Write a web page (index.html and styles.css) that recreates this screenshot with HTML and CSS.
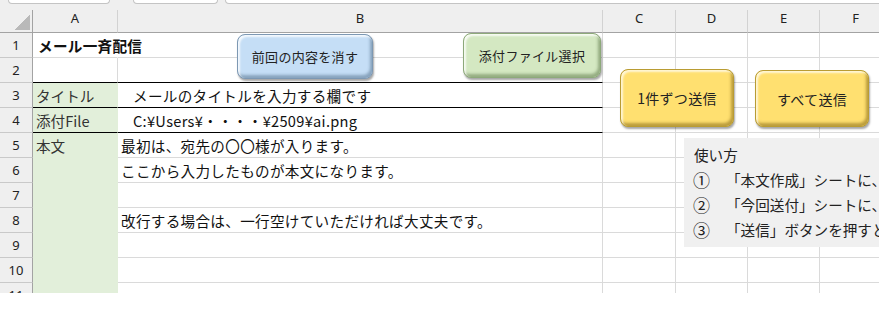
FILE: index.html
```html
<!DOCTYPE html>
<html lang="ja">
<head>
<meta charset="utf-8">
<title>メール一斉配信</title>
<link rel="stylesheet" href="styles.css">
</head>
<body>
<div class="sheet">
  <div class="topbar">
    <div class="tab t1"></div>
    <div class="tab t2"></div>
    <div class="tab t3"></div>
  </div>
  <div class="grid">
    <div class="h corner"><span class="tri"></span></div>
    <div class="h">A</div>
    <div class="h">B</div>
    <div class="h">C</div>
    <div class="h">D</div>
    <div class="h">E</div>
    <div class="h">F</div>

    <div class="r">1</div>
    <div class="c title nor">メール一斉配信</div>
    <div class="c"></div><div class="c"></div><div class="c"></div><div class="c"></div><div class="c"></div>

    <div class="r">2</div>
    <div class="c bk"></div>
    <div class="c bk"></div><div class="c"></div><div class="c"></div><div class="c"></div><div class="c"></div>

    <div class="r">3</div>
    <div class="c g bk">タイトル</div>
    <div class="c bk ind">メールのタイトルを入力する欄です</div><div class="c"></div><div class="c"></div><div class="c"></div><div class="c"></div>

    <div class="r">4</div>
    <div class="c g bk">添付File</div>
    <div class="c bk ind">C:¥Users¥・・・・¥2509¥ai.png</div><div class="c"></div><div class="c"></div><div class="c"></div><div class="c"></div>

    <div class="r">5</div>
    <div class="c g gg">本文</div>
    <div class="c">最初は、宛先の〇〇様が入ります。</div><div class="c"></div><div class="c"></div><div class="c"></div><div class="c"></div>

    <div class="r">6</div>
    <div class="c g gg"></div>
    <div class="c">ここから入力したものが本文になります。</div><div class="c"></div><div class="c"></div><div class="c"></div><div class="c"></div>

    <div class="r">7</div>
    <div class="c g gg"></div>
    <div class="c"></div><div class="c"></div><div class="c"></div><div class="c"></div><div class="c"></div>

    <div class="r">8</div>
    <div class="c g gg"></div>
    <div class="c">改行する場合は、一行空けていただければ大丈夫です。</div><div class="c"></div><div class="c"></div><div class="c"></div><div class="c"></div>

    <div class="r">9</div>
    <div class="c g gg"></div>
    <div class="c"></div><div class="c"></div><div class="c"></div><div class="c"></div><div class="c"></div>

    <div class="r">10</div>
    <div class="c g gg"></div>
    <div class="c"></div><div class="c"></div><div class="c"></div><div class="c"></div><div class="c"></div>

    <div class="r">11</div>
    <div class="c g gg"></div>
    <div class="c"></div><div class="c"></div><div class="c"></div><div class="c"></div><div class="c"></div>
  </div>

  <div class="btn blue">前回の内容を消す</div>
  <div class="btn green">添付ファイル選択</div>
  <div class="btn yellow y1">1件ずつ送信</div>
  <div class="btn yellow y2">すべて送信</div>

  <div class="note">
    <div class="nl">使い方</div>
    <div class="nl"><span class="num">①</span>「本文作成」シートに、</div>
    <div class="nl"><span class="num">②</span>「今回送付」シートに、</div>
    <div class="nl"><span class="num">③</span>「送信」ボタンを押すと</div>
  </div>
</div>
</body>
</html>
```

FILE: styles.css
```css
html, body {
  margin: 0;
  padding: 0;
  background: #fff;
}

.sheet {
  position: relative;
  width: 879px;
  height: 312px;
  overflow: hidden;
  background: #fff;
  font-family: "Noto Sans CJK JP", "Noto Sans", sans-serif;
  color: #111;
}

.topbar {
  height: 10px;
  background: #efefef;
  display: flex;
  align-items: flex-start;
  padding-left: 8px;
  box-sizing: border-box;
}

.tab {
  height: 3px;
  background: #fff;
  border: 1px solid #c4c4c4;
  border-top: none;
  border-radius: 0 0 4px 4px;
}
.t1 { width: 100px; }
.t2 { width: 83px; margin-left: 23px; }
.t3 { flex: 1; margin-left: 7px; margin-right: -10px; }

.grid {
  display: grid;
  grid-template-columns: 33px 85px 485px 73px 72px 72px 72px;
  grid-template-rows: 23px repeat(11, 25px);
  width: 892px;
  height: 283px;
  overflow: hidden;
}

.h {
  background: #efefef;
  border-right: 1px solid #d2d2d2;
  border-bottom: 1px solid #a3a3a3;
  box-sizing: border-box;
  display: flex;
  justify-content: center;
  align-items: center;
  padding-bottom: 7px;
  font-family: "Noto Sans", "Liberation Sans", sans-serif;
  font-size: 13px;
  color: #222;
}

.corner {
  justify-content: flex-end;
  align-items: flex-end;
  padding: 0 2px 2px 0;
  border-right: 1px solid #a3a3a3;
}

.tri {
  width: 16px;
  height: 16px;
  background: linear-gradient(to bottom right, transparent 50%, #b9b9b9 50%);
}

.r {
  background: #efefef;
  border-right: 1px solid #a3a3a3;
  border-bottom: 1px solid #c9c9c9;
  box-sizing: border-box;
  display: flex;
  justify-content: center;
  align-items: center;
  font-family: "Noto Sans", "Liberation Sans", sans-serif;
  font-size: 13px;
  color: #222;
}

.c {
  border-right: 1px solid #dadada;
  border-bottom: 1px solid #dadada;
  box-sizing: border-box;
  display: flex;
  align-items: center;
  padding: 1px 0 0 3px;
  white-space: nowrap;
  overflow: visible;
  font-size: 14.6px;
  letter-spacing: 0.3px;
  color: #111;
}

.title {
  font-weight: bold;
  padding-left: 5px;
}

.nor { border-right-color: transparent; }

.bk { border-bottom: 1px solid #000; }

.g {
  background: #e2efda;
  border-right-color: #e2efda;
  color: #333;
  letter-spacing: 0;
}

.gg { border-bottom-color: #e2efda; }

.ind { padding-left: 15px; }

.btn {
  position: absolute;
  box-sizing: border-box;
  display: flex;
  justify-content: center;
  align-items: center;
  border-radius: 8px;
  font-size: 13px;
  color: #222;
  letter-spacing: 0.3px;
}

.blue {
  left: 237px;
  top: 34px;
  width: 136px;
  height: 45px;
  background: #c5def6;
  border: 1px solid #7d98b3;
  box-shadow: inset 2px 2px 2px rgba(255, 255, 255, 0.8),
              inset -2px -3px 3px rgba(60, 90, 120, 0.45),
              1px 2px 2px rgba(0, 0, 0, 0.35);
}

.green {
  left: 463px;
  top: 33px;
  width: 138px;
  height: 45px;
  background: #d4e8c2;
  border: 1px solid #8da97a;
  box-shadow: inset 2px 2px 2px rgba(255, 255, 255, 0.8),
              inset -2px -3px 3px rgba(70, 100, 50, 0.45),
              1px 2px 2px rgba(0, 0, 0, 0.35);
}

.yellow {
  width: 114px;
  height: 58px;
  background: #ffe070;
  border: 1px solid #b99c33;
  font-size: 14px;
  box-shadow: inset 2px 2px 2px rgba(255, 255, 255, 0.7),
              inset -2px -3px 3px rgba(120, 90, 10, 0.5),
              1px 2px 2px rgba(0, 0, 0, 0.35);
}
.y1 { left: 620px; top: 69px; }
.y2 { left: 755px; top: 70px; height: 57px; }

.note {
  position: absolute;
  left: 684px;
  top: 138px;
  width: 220px;
  height: 109px;
  background: #f0f0f0;
  box-sizing: border-box;
  padding: 4px 0 0 10px;
  font-size: 14.6px;
  color: #222;
}

.nl {
  height: 25px;
  display: flex;
  align-items: center;
  white-space: nowrap;
}

.num {
  display: inline-block;
  width: 33px;
  font-size: 17px;
  line-height: 1;
  margin-left: -1px;
}
```
